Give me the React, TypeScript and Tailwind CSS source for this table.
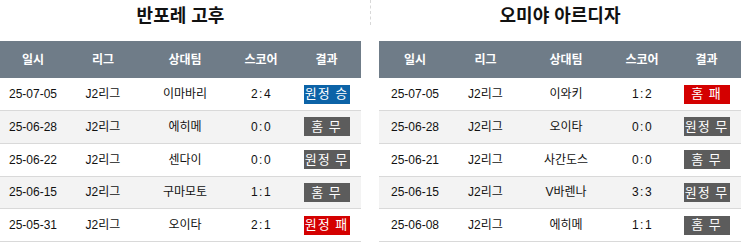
import React from "react";

type Row = { date: string; league: string; opp: string; score: string; result: string; color: "blue" | "gray" | "red" };

const left: Row[] = [
  { date: "25-07-05", league: "J2리그", opp: "이마바리", score: "2:4", result: "원정 승", color: "blue" },
  { date: "25-06-28", league: "J2리그", opp: "에히메", score: "0:0", result: "홈 무", color: "gray" },
  { date: "25-06-22", league: "J2리그", opp: "센다이", score: "0:0", result: "원정 무", color: "gray" },
  { date: "25-06-15", league: "J2리그", opp: "구마모토", score: "1:1", result: "홈 무", color: "gray" },
  { date: "25-05-31", league: "J2리그", opp: "오이타", score: "2:1", result: "원정 패", color: "red" },
];

const right: Row[] = [
  { date: "25-07-05", league: "J2리그", opp: "이와키", score: "1:2", result: "홈 패", color: "red" },
  { date: "25-06-28", league: "J2리그", opp: "오이타", score: "0:0", result: "원정 무", color: "gray" },
  { date: "25-06-21", league: "J2리그", opp: "사간도스", score: "0:0", result: "홈 무", color: "gray" },
  { date: "25-06-15", league: "J2리그", opp: "V바렌나", score: "3:3", result: "원정 무", color: "gray" },
  { date: "25-06-08", league: "J2리그", opp: "에히메", score: "1:1", result: "홈 무", color: "gray" },
];

const badgeColor = {
  blue: "bg-[#0c63a7]",
  gray: "bg-[#5c5c5c]",
  red: "bg-[#d40000]",
};

function Table({ title, rows, width, cols }: { title: string; rows: Row[]; width: string; cols: string }) {
  return (
    <div className={`${width} flex flex-col`}>
      <div className="h-[41px] flex items-center justify-center pb-[7px] text-[18px] font-bold text-[#111]">{title}</div>
      <div className={`${cols} h-[38px] bg-[#6f7c88] text-white text-[12px] font-bold items-center text-center`}>
        <div>일시</div>
        <div>리그</div>
        <div>상대팀</div>
        <div>스코어</div>
        <div>결과</div>
      </div>
      {rows.map((r, i) => (
        <div
          key={i}
          className={`${cols} h-[33px] border-b border-[#d9d9d9] items-center text-center text-[12px] text-[#111] ${i % 2 === 1 ? "bg-[#f3f3f3]" : "bg-white"}`}
        >
          <div>{r.date}</div>
          <div>{r.league}</div>
          <div>{r.opp}</div>
          <div className="tracking-[1.5px] pl-[1px]">{r.score}</div>
          <div className="flex justify-center">
            <span className={`${badgeColor[r.color]} w-[46px] h-[19px] flex items-center justify-center text-white text-[13px] tracking-[1px]`}>
              {r.result}
            </span>
          </div>
        </div>
      ))}
    </div>
  );
}

export default function App() {
  return (
    <div
      className="w-[741px] h-[242px] overflow-hidden bg-white flex"
      style={{ fontFamily: '"Liberation Sans", "Noto Sans CJK KR", sans-serif' }}
    >
      <Table title="반포레 고후" rows={left} width="w-[361px]" cols="grid grid-cols-[66px_74px_90px_62px_1fr]" />
      <div className="w-[18px] flex justify-center">
        <div className="w-0 h-[25px] border-l border-dashed border-[#d8d8d8]" />
      </div>
      <Table title="오미야 아르디자" rows={right} width="w-[362px]" cols="grid grid-cols-[72px_69px_92px_60px_1fr]" />
    </div>
  );
}
